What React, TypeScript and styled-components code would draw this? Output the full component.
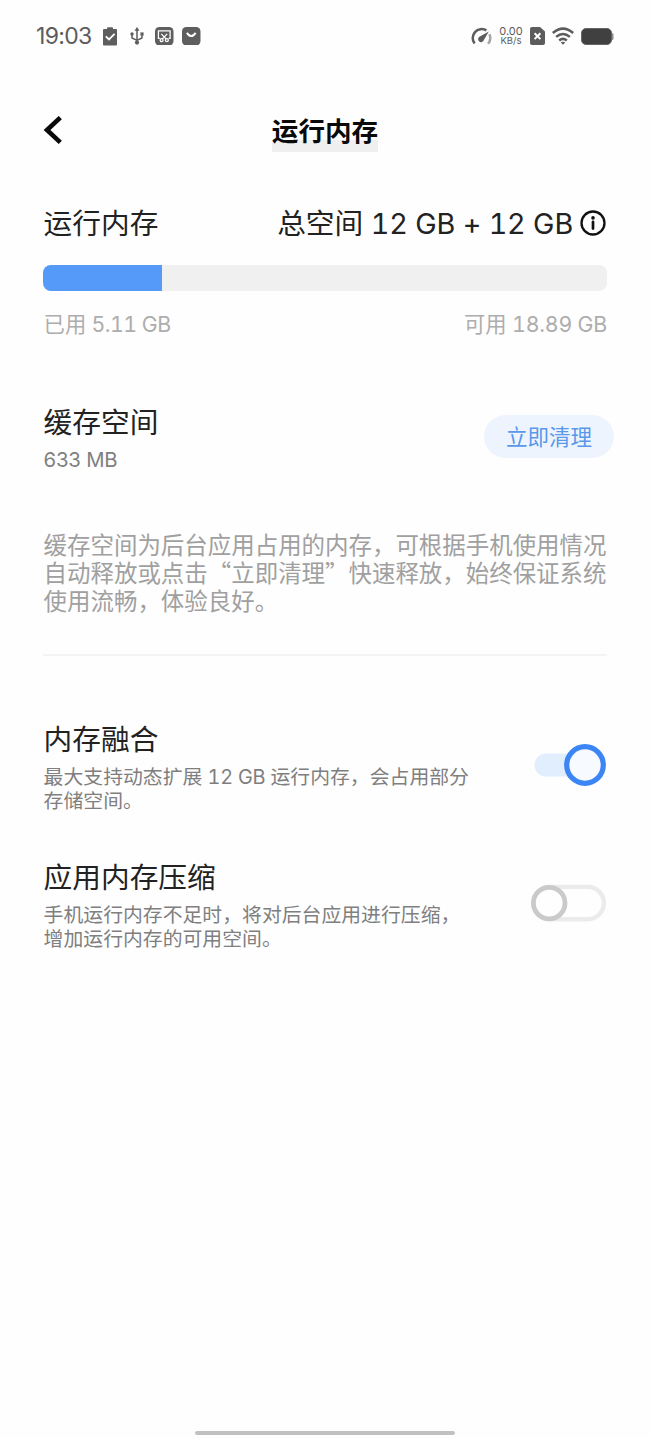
import React, { useState } from "react";
import styled, { createGlobalStyle } from "styled-components";

const LATIN_FIRST = '"Inter", "Noto Sans CJK SC", sans-serif';
const CJK_FIRST = '"Noto Sans CJK SC", "Inter", sans-serif';

const GlobalStyle = createGlobalStyle`
  * { box-sizing: border-box; }
  body { margin: 0; background: #fefefe; font-family: ${LATIN_FIRST}; }
  h1, h2, p { margin: 0; font-weight: 400; }
  button { border: 0; padding: 0; background: none; font: inherit; cursor: pointer; }
  svg { display: block; }
`;

const Screen = styled.div`
  width: 650px;
  height: 1437px;
  display: flex;
  flex-direction: column;
  background: #fefefe;
  overflow: hidden;
  white-space: nowrap;
`;

const StatusBar = styled.header`
  height: 72px;
  padding: 0 36px 0 36px;
  display: flex;
  align-items: center;
  justify-content: space-between;
  color: #5c5c5c;
`;

const StatusGroup = styled.div<{ $gap: number }>`
  display: flex;
  align-items: center;
  gap: ${(p) => p.$gap}px;
`;

const Clock = styled.span`
  width: 56px;
  font-size: 23px;
  line-height: 28px;
  letter-spacing: -0.7px;
`;

const NetSpeed = styled.div`
  width: 24px;
  display: flex;
  flex-direction: column;
  align-items: center;
`;

const SpeedLine = styled.span<{ $size: number }>`
  font-size: ${(p) => p.$size}px;
  line-height: 10px;
`;

const NavBar = styled.nav`
  height: 118px;
  padding: 0 43px;
  display: grid;
  grid-template-columns: 60px 1fr 60px;
  align-items: center;
`;

const NavTitle = styled.h1`
  justify-self: center;
  height: 41px;
  margin-top: 1px;
  line-height: 40px;
  font-size: 26.6px;
  font-weight: 700;
  color: #0a0a0a;
  background: linear-gradient(#fefefe 29px, #efefef 29px);
`;

const Content = styled.main`
  flex: 1;
  padding: 0 43px;
  display: flex;
  flex-direction: column;
`;

const Row = styled.div<{ $top?: number }>`
  display: flex;
  justify-content: space-between;
  align-items: flex-start;
  margin-top: ${(p) => p.$top ?? 0}px;
  padding-left: 0.6px;
`;

const Heading = styled.h2`
  font-size: 28.7px;
  line-height: 42px;
  color: #222;
`;

const Total = styled.div`
  display: flex;
  align-items: center;
  gap: 7px;
  padding-right: 1px;
`;

const Latin = styled.span<{ $track: number }>`
  letter-spacing: ${(p) => p.$track}px;
  font-variant-numeric: tabular-nums;
`;

const Meter = styled.div`
  height: 26px;
  margin-top: 20px;
  border-radius: 8px;
  background: #f0f0f0;
  overflow: hidden;
`;

const MeterFill = styled.div`
  height: 100%;
  background: #559af8;
`;

const Caption = styled.span`
  font-size: 21.3px;
  line-height: 30px;
  color: #adadad;
`;

const CacheSize = styled.p`
  font-size: 20.3px;
  line-height: 30px;
  margin-top: 1px;
  letter-spacing: -0.2px;
  color: #808080;
`;

const CleanButton = styled.button`
  width: 130px;
  height: 43px;
  margin: 13px -7px 0 0;
  border-radius: 22px;
  background: #edf4fe;
  color: #5a98ea;
  font-size: 21.5px;
  line-height: 45px;
`;

const Note = styled.p`
  margin-top: 55px;
  padding-left: 0.6px;
  font-family: ${CJK_FIRST};
  font-size: 23.46px;
  line-height: 28px;
  color: #a0a0a0;
`;

const Line = styled.span`
  display: block;
`;

const Divider = styled.hr`
  width: 100%;
  height: 2px;
  margin: 40px 0 0;
  border: 0;
  background: #f4f4f4;
`;

const Description = styled.p`
  margin-top: 4px;
  font-size: 19.85px;
  line-height: 24px;
  color: #7f7f7f;
`;

const Switch = styled.button`
  width: 76px;
  height: 42px;
  margin-top: 25px;
`;

const HomeIndicator = styled.div`
  width: 260px;
  height: 4px;
  margin: 0 auto 2px;
  border-radius: 2px;
  background: #c1c1c1;
`;

const ClipboardIcon = () => (
  <svg width="14" height="19" viewBox="0 0 14 19">
    <path d="M1 2H4V1.2Q4 .3 5 .3H9Q10 .3 10 1.2V2H13Q14 2 14 3V17.6Q14 18.6 13 18.6H1Q0 18.6 0 17.6V3Q0 2 1 2Z" fill="#5e5e5e" />
    <path d="M2.8 9.3 6 12.4 11.6 6.9" fill="none" stroke="#fff" strokeWidth="1.8" />
  </svg>
);

const UsbIcon = () => (
  <svg width="14" height="18" viewBox="0 0 14 18" fill="none" stroke="#5e5e5e" strokeWidth="1.5">
    <path d="M7 2.5V15M7 13.4 2 11V7M7 13.4 12 11V7" />
    <path d="M7 0 9.5 3.8H4.5Z" fill="#5e5e5e" stroke="none" />
    <circle cx="7" cy="15.6" r="2.1" fill="#5e5e5e" stroke="none" />
    <circle cx="2" cy="7" r="1.7" fill="#5e5e5e" stroke="none" />
    <path d="M10.4 5.4H13.6V8.6H10.4Z" fill="#5e5e5e" stroke="none" />
  </svg>
);

const ScreenshotIcon = () => (
  <svg width="18.5" height="18.5" viewBox="0 0 19 19">
    <rect width="19" height="19" rx="4.5" fill="#5e5e5e" />
    <g fill="none" stroke="#fff" strokeWidth="1.3">
      <path d="M5 11.8H3.5V4H15.5V11.8H14M6.5 7 11.5 12.5M12.5 7 7.5 12.5" />
      <circle cx="6.8" cy="13.5" r="1.5" />
      <circle cx="12.2" cy="13.5" r="1.5" />
    </g>
  </svg>
);

const StoreIcon = () => (
  <svg width="18.5" height="18.5" viewBox="0 0 19 19">
    <rect width="19" height="19" rx="4.5" fill="#5e5e5e" />
    <path d="M5 6Q9.5 12.6 14 6" fill="none" stroke="#fff" strokeWidth="2" />
  </svg>
);

const GaugeIcon = () => (
  <svg width="22" height="19" viewBox="0 0 22 19" fill="none">
    <path d="M4.6 16.6A9 9 0 0 1 16.4 3.4" stroke="#5c5c5c" strokeWidth="2.5" />
    <path d="M19.4 7.2A9 9 0 0 1 18 16.8" stroke="#a5a5a5" strokeWidth="2.5" />
    <path d="M18.8 4.6 14 12.8A3 3 0 1 1 9.8 9.4Z" fill="#5c5c5c" />
  </svg>
);

const SimIcon = () => (
  <svg width="15" height="18" viewBox="0 0 15 18">
    <path d="M2 0H10L15 4.5V16Q15 18 13 18H2Q0 18 0 16V2Q0 0 2 0Z" fill="#5c5c5c" />
    <path d="M4.6 6.3 10.4 12.1M10.4 6.3 4.6 12.1" stroke="#fff" strokeWidth="2" />
  </svg>
);

const WifiIcon = () => (
  <svg width="22" height="18" viewBox="0 0 22 18" fill="none" stroke="#5c5c5c" strokeWidth="2.5">
    <path d="M.8 6Q11-2.8 21.2 6M4.1 9.9Q11 4.2 17.9 9.9M7.2 13.4Q11 10.4 14.8 13.4" />
    <path d="M8.8 15.4Q11 13.9 13.2 15.4L11 17.8Z" fill="#5c5c5c" stroke="none" />
  </svg>
);

const BatteryIcon = () => (
  <svg width="33" height="17" viewBox="0 0 33 17">
    <rect x="29" y="5" width="3.5" height="7" rx="1.6" fill="#8a8a8a" />
    <rect x=".5" y=".5" width="30" height="16" rx="4.5" fill="#404040" stroke="#666" />
  </svg>
);

const BackIcon = () => (
  <svg width="20" height="30" viewBox="0 0 20 30">
    <path d="M17.3 1.6 4 14 17.3 26.4" fill="none" stroke="#0a0a0a" strokeWidth="4.6" />
  </svg>
);

const InfoIcon = () => (
  <svg width="26" height="29" viewBox="0 0 26 29">
    <circle cx="13" cy="13" r="11.5" fill="none" stroke="#111" strokeWidth="2.3" />
    <circle cx="13" cy="7.9" r="1.8" fill="#111" />
    <path d="M13 11.8V18.6" stroke="#111" strokeWidth="2.7" strokeLinecap="round" />
  </svg>
);

const ToggleDrawing = ({ on }: { on: boolean }) =>
  on ? (
    <svg width="76" height="42" viewBox="0 0 76 42">
      <rect x="3.5" y="9.5" width="60" height="23" rx="11.5" fill="#e1eefe" />
      <circle cx="54" cy="21" r="18.3" fill="#f7fbff" stroke="#3b85f5" strokeWidth="5.2" />
    </svg>
  ) : (
    <svg width="76" height="42" viewBox="0 0 76 42">
      <rect x="2.4" y="4.9" width="70.5" height="32.4" rx="16.2" fill="#fefefe" stroke="#ebebeb" strokeWidth="4.4" />
      <circle cx="18.2" cy="21.1" r="15.8" fill="#fefefe" stroke="#cacaca" strokeWidth="4.8" />
    </svg>
  );

export default function App() {
  const [fusion, setFusion] = useState(true);
  const [compress, setCompress] = useState(false);
  const usedShare = (5.11 / 24.2) * 100;

  return (
    <Screen lang="zh-CN">
      <GlobalStyle />
      <StatusBar>
        <StatusGroup $gap={11}>
          <Clock>19:03</Clock>
          <StatusGroup $gap={11}>
            <StatusGroup $gap={13}>
              <ClipboardIcon />
              <UsbIcon />
            </StatusGroup>
            <StatusGroup $gap={8.5}>
              <ScreenshotIcon />
              <StoreIcon />
            </StatusGroup>
          </StatusGroup>
        </StatusGroup>
        <StatusGroup $gap={7}>
          <GaugeIcon />
          <NetSpeed>
            <SpeedLine $size={11}>0.00</SpeedLine>
            <SpeedLine $size={9.5}>KB/s</SpeedLine>
          </NetSpeed>
          <SimIcon />
          <WifiIcon />
          <BatteryIcon />
        </StatusGroup>
      </StatusBar>
      <NavBar>
        <BackIcon />
        <NavTitle>运行内存</NavTitle>
      </NavBar>
      <Content>
        <Row $top={13}>
          <Heading>运行内存</Heading>
          <Total>
            <Heading as="span">
              总空间<Latin $track={-0.15}> 12 GB + 12 GB</Latin>
            </Heading>
            <InfoIcon />
          </Total>
        </Row>
        <Meter>
          <MeterFill style={{ width: `${usedShare}%` }} />
        </Meter>
        <Row $top={18}>
          <Caption>已用<Latin $track={-0.5}> 5.11 GB</Latin></Caption>
          <Caption>可用<Latin $track={-0.2}> 18.89 GB</Latin></Caption>
        </Row>
        <Row $top={63}>
          <div>
            <Heading>缓存空间</Heading>
            <CacheSize>633 MB</CacheSize>
          </div>
          <CleanButton>立即清理</CleanButton>
        </Row>
        <Note>
          <Line>缓存空间为后台应用占用的内存，可根据手机使用情况</Line>
          <Line>自动释放或点击“立即清理”快速释放，始终保证系统</Line>
          <Line>使用流畅，体验良好。</Line>
        </Note>
        <Divider />
        <Row $top={63}>
          <div>
            <Heading>内存融合</Heading>
            <Description>
              <Line>最大支持动态扩展<Latin $track={-0.2}> 12 GB </Latin>运行内存，会占用部分</Line>
              <Line>存储空间。</Line>
            </Description>
          </div>
          <Switch role="switch" aria-checked={fusion} onClick={() => setFusion(!fusion)}>
            <ToggleDrawing on={fusion} />
          </Switch>
        </Row>
        <Row $top={44}>
          <div>
            <Heading>应用内存压缩</Heading>
            <Description>
              <Line>手机运行内存不足时，将对后台应用进行压缩，</Line>
              <Line>增加运行内存的可用空间。</Line>
            </Description>
          </div>
          <Switch role="switch" aria-checked={compress} onClick={() => setCompress(!compress)}>
            <ToggleDrawing on={compress} />
          </Switch>
        </Row>
      </Content>
      <HomeIndicator />
    </Screen>
  );
}
